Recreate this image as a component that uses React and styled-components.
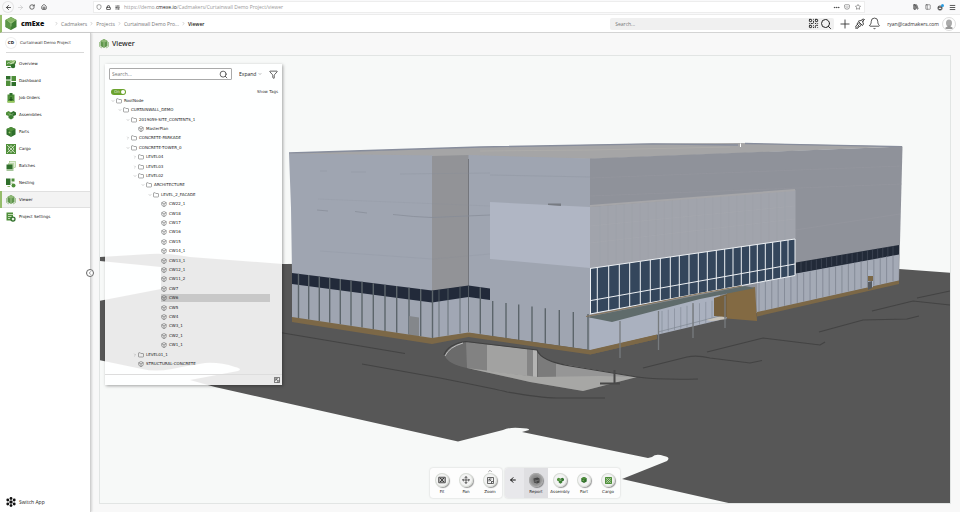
import React, { useState } from 'react';
import styled, { createGlobalStyle, css } from 'styled-components';
import {
  ArrowLeft, ArrowRight, RotateCw, House, Shield, Lock, SlidersHorizontal, Ellipsis, Star,
  PanelLeft, Menu, Search, Plus, Bell, QrCode, ChevronRight, ChevronLeft, ChevronDown, ChevronUp,
  Funnel, Box, Folder, Pocket, LibraryBig, Move,
} from 'lucide-react';

const GlobalStyle = createGlobalStyle`
  * { box-sizing: border-box; }
  body {
    margin: 0;
    background: #f8f8f8;
    color: #333;
    font-family: 'Open Sans', 'Noto Sans', sans-serif;
    font-size: 5px;
  }
  button, input, select {
    font: inherit;
    color: inherit;
    border: 0;
    padding: 0;
    margin: 0;
    background: none;
  }
  button { cursor: pointer; }
  a { color: inherit; text-decoration: none; }
  svg { display: block; flex: none; }
`

const small = css`
  font-family: 'DejaVu Sans', 'Noto Sans', sans-serif;
  font-size: 4px;
  line-height: 6px;
`

const Page = styled.div`
  display: flex;
  flex-direction: column;
  min-height: 100vh;
`

/* browser bar */

const BrowserBar = styled.div`
  display: flex;
  align-items: center;
  height: 15px;
  padding: 0 3px;
  background: #f9f9fa;
  border-bottom: 1px solid #ececec;
  color: #444;
`
const BrowserButtons = styled.div`
  display: flex;
  align-items: center;
  gap: ${p => p.$gap || 2}px;
`
const BrowserButton = styled.button`
  display: flex;
  align-items: center;
  justify-content: center;
  width: 10px;
  height: 10px;
  border-radius: 50%;
  opacity: ${p => p.disabled ? 0.3 : 1};
  ${p => p.$ring && css`box-shadow: 0 0 0 1px #e4e4e4;`}
`
const AddressBar = styled.div`
  display: flex;
  align-items: center;
  flex: 1;
  height: 12px;
  margin: 0 46px 0 44px;
  padding: 0 1px 0 2px;
  gap: 4px;
  background: #fff;
  border: 1px solid #ededed;
`
const Url = styled.div`
  flex: 1;
  font-size: 5px;
  line-height: 8px;
  color: #999;
  white-space: nowrap;
  b { color: #222; font-weight: 500; }
`

/* app header */

const Header = styled.header`
  display: flex;
  align-items: center;
  height: 18px;
  padding-right: 4px;
  background: #fff;
  border-bottom: 1px solid #d4d4d4;
  border-left: 2px solid #96bd6b;
`
const Logo = styled.a`
  display: flex;
  align-items: center;
  gap: 4px;
  width: 52px;
  padding-left: 3px;
  font-size: 7px;
  line-height: 12px;
  font-weight: 800;
  color: #111;
`
const Crumbs = styled.nav`
  display: flex;
  align-items: center;
  gap: 2px;
  flex: 1;
  font-size: 5px;
  line-height: 8px;
  color: #666;
  white-space: nowrap;
  svg { color: #999; }
`
const Crumb = styled.a`
  font-weight: ${p => p.$current ? 600 : 400};
  color: ${p => p.$current ? '#222' : '#777'};
`
const GlobalSearch = styled.label`
  display: flex;
  align-items: center;
  width: 224px;
  height: 12px;
  padding: 0 2px 0 5px;
  gap: 1px;
  border-radius: 2px;
  background: #f0f0f0;
  color: #222;
  input {
    flex: 1;
    min-width: 0;
    height: 10px;
    outline: none;
    font-size: 5px;
    &::placeholder { color: #777; }
  }
`
const HeaderActions = styled.div`
  display: flex;
  align-items: center;
  gap: 2px;
  margin: 0 6px 0 4px;
  color: #333;
`
const Email = styled.span`
  font-size: 5px;
  line-height: 8px;
  color: #333;
`
const Avatar = styled.button`
  display: flex;
  align-items: center;
  justify-content: center;
  width: 14px;
  height: 14px;
  margin-left: 3px;
  border-radius: 50%;
  border: 1px solid #ddd;
`

/* sidebar */

const Body = styled.div`
  display: flex;
  flex: 1;
`
const Sidebar = styled.aside`
  position: relative;
  display: flex;
  flex-direction: column;
  width: 91px;
  background: #fff;
  border-right: 1px solid #d0d0d0;
  box-shadow: 1px 0 2px rgba(0, 0, 0, 0.15);
`
const Project = styled.div`
  ${small}
  display: flex;
  align-items: center;
  gap: 4px;
  height: 20px;
  margin: 0 6px;
  border-bottom: 1px solid #d8d8d8;
  white-space: nowrap;
`
const ProjectBadge = styled.span`
  display: flex;
  align-items: center;
  justify-content: center;
  width: 10px;
  height: 10px;
  border-radius: 50%;
  box-shadow: 0 0 0 1px #eee;
  font-weight: 700;
  color: #222;
`
const NavList = styled.nav`
  display: flex;
  flex-direction: column;
  flex: 1;
  padding-top: 2px;
`
const NavItem = styled.a`
  ${small}
  display: flex;
  align-items: center;
  gap: 3px;
  height: 17px;
  padding-left: 4px;
  border-left: 2px solid transparent;
  color: #111;
  ${p => p.$active && css`
    background: #f3f3f3;
    border-left-color: #96bd6b;
    box-shadow: inset 0 1px #e0e0e0, inset 0 -1px #e0e0e0;
  `}
`
const SwitchApp = styled.button`
  display: flex;
  align-items: center;
  gap: 3px;
  height: 20px;
  padding-left: 6px;
  font-size: 5px;
  line-height: 8px;
  color: #222;
`
const CollapseButton = styled.button`
  position: absolute;
  right: -4px;
  top: 50%;
  transform: translateY(-50%);
  display: flex;
  align-items: center;
  justify-content: center;
  width: 8px;
  height: 8px;
  border-radius: 50%;
  border: 1px solid #666;
  background: #fff;
`

/* viewer */

const Main = styled.main`
  display: flex;
  flex-direction: column;
  flex: 1;
  padding: 0 9px 8px 8px;
`
const Title = styled.h1`
  display: flex;
  align-items: center;
  gap: 3px;
  height: 22px;
  margin: 0;
  font-family: 'Noto Sans', sans-serif;
  font-size: 7px;
  line-height: 10px;
  font-weight: 500;
  color: #222;
`
const Viewport = styled.section`
  position: relative;
  flex: 1;
  overflow: hidden;
  background: #f7f9f8;
  border: 1px solid #e2e5e4;
`
const Canvas = styled.svg`
  position: absolute;
  inset: 0;
  width: 100%;
  height: 100%;
`
const TreePanel = styled.div`
  position: absolute;
  left: 5px;
  top: 8px;
  display: flex;
  flex-direction: column;
  width: 177px;
  height: 321px;
  background: rgba(255, 255, 255, 0.88);
  box-shadow: 1px 1px 3px rgba(0, 0, 0, 0.35);
`
const PanelTools = styled.div`
  display: flex;
  align-items: center;
  justify-content: space-between;
  padding: 4px 4px 0;
`
const PanelSearch = styled.label`
  display: flex;
  align-items: center;
  width: 123px;
  height: 12px;
  padding: 0 3px 0 2px;
  border: 1px solid #aaa;
  border-radius: 1px;
  background: #fff;
  input {
    flex: 1;
    min-width: 0;
    height: 8px;
    font-size: 5px;
    outline: none;
    &::placeholder { color: #777; }
  }
`
const ExpandBox = styled.label`
  display: flex;
  align-items: center;
  gap: 1px;
  color: #777;
  select {
    appearance: none;
    font-size: 5px;
    line-height: 8px;
    font-weight: 500;
    color: #222;
    outline: none;
  }
`
const TagsRow = styled.div`
  ${small}
  display: flex;
  align-items: center;
  justify-content: space-between;
  height: 8px;
  margin-top: 8px;
  padding: 0 4px 0 6px;
`
const Toggle = styled.input`
  appearance: none;
  display: flex;
  align-items: center;
  justify-content: flex-end;
  width: 15px;
  height: 6px;
  padding: 0 1px;
  border-radius: 3px;
  background: #c4c4c4;
  color: #fff;
  font-size: 4px;
  line-height: 6px;
  cursor: pointer;
  &::after {
    content: '';
    width: 4px;
    height: 4px;
    border-radius: 50%;
    background: #fff;
  }
  &:checked { background: #6ba32f; }
  &:checked::before { content: 'On'; flex: 1; padding-left: 2px; opacity: 0.8; }
`
const Tree = styled.ul`
  display: flex;
  flex-direction: column;
  flex: 1;
  margin: 0;
  padding: 0;
  list-style: none;
`
const TreeItem = styled.li`
  display: flex;
  flex: 1;
  align-items: center;
  min-height: 0;
  padding-left: ${p => p.$indent}px;
  padding-right: 12px;
`
const Caret = styled.span`
  display: flex;
  justify-content: center;
  width: 7px;
  color: #777;
`
const TreeButton = styled.button`
  ${small}
  display: flex;
  flex: 1;
  align-items: center;
  gap: 2px;
  height: 8px;
  color: #222;
  white-space: nowrap;
  background: ${p => p.$selected ? '#c8c8c8' : 'none'};
  svg { color: #555; }
`
const PanelFooter = styled.div`
  display: flex;
  align-items: center;
  justify-content: flex-end;
  height: 11px;
  margin-top: 5px;
  padding-right: 2px;
  border-top: 1px solid #ddd;
`
const Toolbar = styled.div`
  position: absolute;
  left: 50%;
  bottom: 5px;
  transform: translateX(-50%);
  display: flex;
  gap: 3px;
`
const ToolGroup = styled.div`
  display: flex;
  height: 30px;
  border-radius: 3px;
  overflow: hidden;
  background: #fdfdfd;
  box-shadow: 0 0 2px rgba(0, 0, 0, 0.2);
`
const ToolButton = styled.button`
  ${small}
  display: flex;
  flex-direction: column;
  align-items: center;
  gap: 2px;
  width: 24px;
  padding-top: 5px;
  color: #222;
  background: ${p => p.$active ? '#dfdfe2' : 'none'};
`
const BackButton = styled.button`
  display: flex;
  justify-content: center;
  width: 19px;
  padding: 8px 3px 0 0;
  color: #111;
  background: #e8e8eb;
`
const Round = styled.span`
  display: flex;
  align-items: center;
  justify-content: center;
  width: 14px;
  height: 14px;
  border-radius: 50%;
  background: ${p => p.$active ? 'radial-gradient(#777, #b4b4b4)' : '#f3f3f3'};
  box-shadow: inset 0 0 0 1px ${p => p.$active ? '#aaa' : '#d8dcd6'}, 1px 1px 1px rgba(0, 0, 0, 0.4);
`
const UpMark = styled.span`
  position: absolute;
  top: 0;
  color: #555;
`

/* green line-up of sidebar icons */

const DARK = '#2f6f2b'
const MID = '#4f8f3a'
const LIGHT = '#8dbb6b'

const glyphs = {
  overview: (
    <>
      <path d="M0 3h12v11H0z" fill={MID} />
      <path d="M7 4l12-2v8l-6 4z" fill={LIGHT} />
      <path d="M2 9l4-2 4 3 7-5" stroke="#e8f2e0" strokeWidth="1.5" fill="none" />
      <circle cx="14" cy="14" r="4.500" fill={DARK} />
      <path d="M16 12l4-8M3 17h6" stroke={DARK} strokeWidth="2" />
    </>
  ),
  dashboard: (
    <>
      <rect x="0" y="0" width="9" height="7" fill={DARK} />
      <rect x="11" y="0" width="9" height="10" fill={MID} />
      <rect x="0" y="9" width="9" height="11" fill={MID} />
      <rect x="11" y="12" width="9" height="8" fill={DARK} />
    </>
  ),
  orders: (
    <>
      <rect x="3" y="3" width="14" height="16" fill={MID} />
      <rect x="7" y="0" width="6" height="5" fill={DARK} />
      <path d="M10 8v6M7 12l3 3 3-3" stroke="#153f16" strokeWidth="2" fill="none" />
      <path d="M3 16h14v3H3z" fill="#9ccc5c" />
    </>
  ),
  assemblies: (
    <>
      <path d="M5 2l5 3v5l-5 2-5-2V5z" fill={MID} />
      <path d="M15 2l5 3v5l-5 2-5-2V5z" fill={DARK} />
      <path d="M10 9l5 3v4l-5 3-5-3v-4z" fill="#3c7f32" />
      <path d="M5 7l5 3 5-3" stroke="#cfe3bf" strokeWidth="1" fill="none" />
    </>
  ),
  parts: (
    <>
      <path d="M10 0l9 4v11l-9 5-9-5V4z" fill={DARK} />
      <path d="M10 0l9 4-9 5-9-5z" fill={MID} />
      <path d="M10 9v11" stroke="#7fae64" />
      <circle cx="7" cy="11" r="2" fill="#9ccc6c" />
    </>
  ),
  cargo: (
    <>
      <rect x="0" y="0" width="20" height="20" fill={MID} />
      <path d="M2 2l16 16M18 2L2 18M4 10l6-7 6 7-6 7z" stroke="#e5f0dc" strokeWidth="1.5" fill="none" />
    </>
  ),
  batches: (
    <>
      <rect x="7" y="1" width="12" height="12" fill="#e2eedb" stroke={LIGHT} />
      <rect x="4" y="4" width="12" height="12" fill="#bcd6a8" />
      <rect x="1" y="7" width="12" height="9" fill={DARK} />
      <path d="M1 18h14" stroke={MID} strokeWidth="2" />
    </>
  ),
  nesting: (
    <>
      <rect x="0" y="1" width="9" height="13" fill={DARK} />
      <rect x="11" y="1" width="6" height="6" fill={MID} />
      <path d="M3 17h5M12 9v3" stroke={LIGHT} strokeWidth="2" />
      <circle cx="15" cy="15" r="4" fill={MID} />
    </>
  ),
  viewer: (
    <>
      <path d="M10 0l7 4v10l-7 4-7-4V4z" fill="#5f964c" />
      <path d="M10 0l7 4-7 4-7-4z" fill="#8fb877" />
      <path d="M10 8v10" stroke="#b9d3a9" strokeWidth="1.5" />
      <path d="M1 6v9l5 3M19 6v9l-5 3" stroke="#8db578" strokeWidth="1.5" fill="none" />
    </>
  ),
  settings: (
    <>
      <rect x="1" y="1" width="13" height="16" fill={MID} />
      <path d="M4 5h14M4 9h7M4 13h5" stroke="#e5f0dc" strokeWidth="1.5" />
      <circle cx="14" cy="14" r="4" fill="#e5f0dc" stroke={DARK} strokeWidth="2.5" />
    </>
  ),
}

const Glyph = ({ name, size = 10 }) => (
  <svg width={size} height={size} viewBox="0 0 20 20" aria-hidden="true">{glyphs[name]}</svg>
)

const ResizeIcon = ({ size }) => (
  <svg width={size} height={size} viewBox="0 0 14 14" fill="none" stroke="#444" strokeWidth="1.6" aria-hidden="true">
    <path d="M1 1h12v12H1zM4 9V4h5M4 4l5 5M9 13V9h4" />
  </svg>
)

const FitIcon = () => (
  <svg width="8" height="8" viewBox="0 0 16 16" fill="none" stroke="#333" strokeWidth="1.8" aria-hidden="true">
    <path d="M1.500 2.500h13v11h-13zM4 7V5h3M9 5h3v2M12 9v2H9M7 11H4V9M5 5l6 6M11 5l-6 6" />
  </svg>
)

const PlugIcon = () => (
  <svg width="12" height="12" viewBox="0 0 24 24" fill="none" stroke="#333" strokeWidth="1.8" aria-hidden="true">
    <path d="M9 7l8 8 2-3-2-5 4-4-3-1-4 3-5 1zM8 9l6 6-3 2-5-5zM6 13l-3 5 3 3 5-4M3 22l3-3M7 16l2 2M16 5l3 3" />
  </svg>
)

const navItems = [
  ['overview', 'Overview'],
  ['dashboard', 'Dashboard'],
  ['orders', 'Job Orders'],
  ['assemblies', 'Assemblies'],
  ['parts', 'Parts'],
  ['cargo', 'Cargo'],
  ['batches', 'Batches'],
  ['nesting', 'Nesting'],
  ['viewer', 'Viewer'],
  ['settings', 'Project Settings'],
]

// level, label, state: open / closed folder, or leaf
const treeNodes = [
  [0, 'RootNode', 'open'],
  [1, 'CURTAINWALL_DEMO', 'open'],
  [2, '2019059-SITE_CONTENTS_1', 'open'],
  [3, 'MasterPlan', 'leaf'],
  [2, 'CONCRETE-PARKADE', 'closed'],
  [2, 'CONCRETE-TOWER_0', 'open'],
  [3, 'LEVEL04', 'closed'],
  [3, 'LEVEL03', 'closed'],
  [3, 'LEVEL02', 'open'],
  [4, 'ARCHITECTURE', 'open'],
  [5, 'LEVEL_2_FACADE', 'open'],
  ...['CW22_1', 'CW18', 'CW17', 'CW16', 'CW15', 'CW14_1', 'CW13_1', 'CW12_1', 'CW11_2', 'CW7',
    'CW6', 'CW5', 'CW4', 'CW3_1', 'CW2_1', 'CW1_1'].map(n => [6, n, 'leaf']),
  [3, 'LEVEL01_1', 'closed'],
  [3, 'STRUCTURAL-CONCRETE', 'leaf'],
]

/* building model */

const lerp = (x, [x1, y1], [x2, y2]) => y1 + ((x - x1) * (y2 - y1)) / (x2 - x1)

const Mullions = ({ xs, top, bottom, ...rest }) => (
  <g {...rest}>
    {xs.map(x => (
      <line key={x} x1={x} x2={x} y1={lerp(x, ...top)} y2={lerp(x, ...bottom)} />
    ))}
  </g>
)

const range = (from, to, n) => Array.from({ length: n }, (_, i) => from + ((to - from) * i) / (n - 1))

const leftXs = [298.5, 308.7, 319.3, 329.7, 340.3, 351, 362, 373.3, 385, 396.7, 409, 420.7, 432.5]
const windowXs = [590.5, 597.3, 608.7, 619.3, 629.7, 640.3, 650.3, 660.3, 670.3, 679.3, 689, 698.3,
  707.3, 716.3, 724.7, 733, 741.3, 749.7, 757.3, 765.3, 772.7, 780.7, 788, 795]

const Scene = () => (
  <Canvas viewBox="100 56 850 447" preserveAspectRatio="xMidYMid slice" role="img" aria-label="Building model">
    {/* ground */}
    <path
      fill="#575757"
      d="M99 257L150 254Q168 253 190 257L283 264L600 262L899 269L952 273V504H733L622 479L667 461Q671 457 664 456
        Q656 453 652 457L648 458L522 432L529 430Q530 428 520 428Q510 427 503 430L458 441.500L215 387L190 380
        L238 371Q243 369 235 367Q220 362 205 363Q180 367 172 369Q155 372 142 369L99 360V301L161 289V267L99 261Z"
    />
    <g fill="none" stroke="#434343" strokeWidth="1.2">
      <path d="M280 332.500L405 353.500M362 364L440 378Q500 390 507 392Q540 398 557 398H605" />
      <path d="M643 368L687 357Q697 355 710 358L750 363L762 360.500M707 352L763 338L820 345L825 342" />
      <path d="M819 332L863 320L907 319L919 316M872 311L913 301L950 305M917 298L950 291" />
      <path d="M637 377Q660 380 698 379" />
    </g>

    {/* roof */}
    <path fill="#a5a5a6" d="M289 153L480 147L653 143.500L740 143L902.500 146.500L720 154L590 159L432 157L289 154.500Z" />
    <path fill="none" stroke="#878d9c" strokeWidth="1.3" d="M289 153L480 147L653 143.800L738 145M745 143.500L902 146.700" />
    <path fill="none" stroke="#adacaa" d="M480 151L590 150L730 147" />
    <path stroke="#fff" d="M740.500 143.500V147" />

    {/* left wing */}
    <path fill="#9fa5b1" d="M289 153.500L433 155.500V339L292 318V273L291 208Z" />
    <path fill="#929397" d="M432 156L469 155V286L432 291Z" />
    <path fill="#a1a7b4" d="M432 301L469 296V333L432 339Z" />
    <path fill="#9fa5b1" d="M468.500 155L590 158.500V350L468.500 333Z" />
    <path fill="none" stroke="#74767c" d="M468.500 159V286" />
    <g fill="none" stroke="#858b97" strokeWidth="0.700">
      <path d="M317 210L328 211M355 211.500L367 213M393 214.500Q415 217 432 217.500L490 215" />
      <path d="M320 171H327M351 172H366M400 174L490 173" opacity="0.4" />
      <path d="M318 199L490 206M320 251L432 259L490 254" opacity="0.25" />
      <path d="M490 175L590 177" opacity="0.4" />
    </g>
    <path fill="#b0b6c4" d="M490 202L590 207V268L490 259Z" />
    <path fill="#777b82" d="M548 203.500H561V206L548 205Z" />

    <path fill="#222a3a" d="M292 273L432 290.500L468.500 285.500L490 288.500V300L468.500 297L432 302.500L292 284Z" />
    <g stroke="#5c656b" strokeWidth="1.4">
      <Mullions xs={leftXs} top={[[292, 273], [432, 290.5]]} bottom={[[292, 317], [432, 338]]} />
      <Mullions xs={[439, 448, 460, 468.5]} top={[[432, 290.5], [468, 285.5]]} bottom={[[432, 338], [468, 332]]} strokeWidth="0.800" />
      <Mullions xs={[480.3]} top={[[468, 285.5], [490, 288.5]]} bottom={[[468, 332], [590, 350]]} />
      <Mullions
        xs={[492.7, 506, 518.7, 532, 545.3, 559.3, 573.3, 588]}
        top={[[492, 301], [588, 314]]}
        bottom={[[468, 333], [590, 350]]}
      />
    </g>
    <path fill="#84878b" d="M409 316L419 317.500V339.500L409 338Z" />
    <path fill="#ddd" d="M412 338.500L421 337.500V341L412 340Z" />
    <path fill="#7c6847" d="M292 317L432 338L468.500 332.500L590 350L657 334.500V339L590 354.500L468.500 337L432 344L292 322Z" />

    {/* right wing */}
    <path fill="#8f929a" d="M590 158.500L902.500 146.500L899 281L757 313L590 340Z" />
    <path fill="none" stroke="#999ba3" strokeWidth="0.600" d="M590 178L902 166M590 196L902 184M795 230L900 214" opacity="0.6" />
    <path fill="#a1a4ac" d="M590 207L795.500 190V240L590 270Z" />
    <path fill="none" stroke="#a6a6a9" strokeWidth="2" d="M590 206L795 190" />
    <path fill="none" stroke="#b1b1b5" strokeWidth="0.600" d="M590 226L795 206M590 243L795 219" opacity="0.3" />
    <Mullions xs={range(600, 785, 24)} top={[[590, 207], [795, 191]]} bottom={[[590, 268], [795, 239]]} stroke="#989ba4" strokeWidth="0.300" opacity="0.5" />
    <path fill="#a4aab6" d="M757 281L796 273L899 254L898.500 280.500L757 313Z" />
    <path fill="#222a38" d="M796 262.500L899 245V254.500L796 273.500Z" />
    <Mullions xs={range(801, 893, 19)} top={[[796, 263], [899, 245]]} bottom={[[796, 273], [899, 254]]} stroke="#4a5160" strokeWidth="0.600" />
    <Mullions xs={range(759, 893, 22)} top={[[757, 282], [899, 254]]} bottom={[[757, 312], [899, 280]]} stroke="#7e8490" strokeWidth="0.800" />
    <path fill="#7c6847" d="M757 312L899 280.500V284L757 316.500Z" />
    <path fill="#aab2c1" d="M868 270H873V287L868 289Z" />
    <path fill="#7c6847" d="M868 276H873V281H868Z" />
    <path fill="#575b60" d="M868 282L872 281V288L868 290Z" />

    {/* entrance */}
    <path fill="#aab1bf" d="M590 318L720 294V320L590 350.500Z" />
    <Mullions xs={range(662, 712, 9)} top={[[657, 312], [720, 299]]} bottom={[[657, 334], [720, 320]]} stroke="#858d99" strokeWidth="0.700" />
    <path fill="none" stroke="#7e8791" strokeWidth="0.700" d="M658 332L720 316" />
    <path fill="#7c6847" d="M590 350L657 334.500V339L590 354.500Z" />
    <path fill="#c8c4bb" d="M706 320L722 316L727 319L712 321Z" />
    <path fill="#76603d" d="M714 298L727 294V317L714 316Z" />
    <path fill="#836a43" d="M727 293L755 287L757 321L727 318.500Z" />
    <path fill="#34465c" d="M590 268.500L795 239V275.500L590 314Z" />
    <g stroke="#eef1f4" fill="none" strokeWidth="1">
      <Mullions xs={windowXs} top={[[590, 268.5], [795, 239]]} bottom={[[590, 314], [795, 275.5]]} />
      <path d="M590 268.500L795 239M590 300.700L795 264M590 314L795 275.500" />
    </g>
    <path fill="#5f6b6b" d="M587 317L745 286L755 288L700 299L612 322Z" />
    <path fill="none" stroke="#86745a" strokeWidth="1" d="M586 316.500L700 293.500L742 286" />
    <g stroke="#777b7e" strokeWidth="1.3">
      <path d="M620 321V358M658.500 311V350M693 303V338M725 296V328" />
    </g>

    {/* parkade ramp */}
    <path fill="#6b6b6b" d="M445 356Q448 345 466 341.500L537 350Q545 362 570 366L637 377L583 391L530 382L467 368Q448 364 445 356Z" />
    <path fill="#828282" d="M466 342L487 344.500V371L467 368Z" />
    <path fill="#a2a2a1" d="M487 344.500L527 349V376L487 371Z" />
    <path fill="#858585" d="M527 349H533V378L527 377Z" />
    <path fill="#b4b4b3" d="M533 350H537V378H533Z" />
    <path fill="#7b7b7b" d="M538 353Q545 361 560 364V377H538Z" />
    <path fill="#969696" d="M556 363L637 377L600 379L556 377Z" />
    <path fill="#a7a7a5" d="M467 368L538 377L600 376L637 377L583 391L530 382Z" />
    <path fill="none" stroke="#404040" strokeWidth="1.100" d="M444 355Q448 344 466 341.500L537 350Q541 361 570 366L637 377" />
    <path fill="none" stroke="#d5d5d5" strokeWidth="0.800" d="M445 356Q449 347 463 343" />
    <path stroke="#484848" strokeWidth="2" d="M614.500 370V384M600 383.500H620" />
  </Canvas>
)

function App() {
  const [selected, setSelected] = useState('CW6')
  const [showTags, setShowTags] = useState(true)

  return (
    <Page>
      <GlobalStyle />
      <BrowserBar>
        <BrowserButtons>
          <BrowserButton $ring aria-label="Back"><ArrowLeft size={7} strokeWidth={3} /></BrowserButton>
          <BrowserButton disabled aria-label="Forward"><ArrowRight size={7} /></BrowserButton>
          <BrowserButton aria-label="Reload"><RotateCw size={6} strokeWidth={3} /></BrowserButton>
          <BrowserButton aria-label="Home"><House size={6} strokeWidth={3} /></BrowserButton>
        </BrowserButtons>
        <AddressBar>
          <Shield size={6} />
          <Lock size={5} strokeWidth={4} />
          <SlidersHorizontal size={5} strokeWidth={3} />
          <Url>https://demo.<b>cmexe.io</b>/Cadmakers/Curtainwall Demo Project/viewer</Url>
          <BrowserButtons $gap={1}>
            <BrowserButton aria-label="Page actions"><Ellipsis size={7} strokeWidth={3} /></BrowserButton>
            <BrowserButton aria-label="Save to Pocket"><Pocket size={6} /></BrowserButton>
            <BrowserButton aria-label="Bookmark"><Star size={6} /></BrowserButton>
          </BrowserButtons>
        </AddressBar>
        <BrowserButtons>
          <BrowserButton aria-label="Library"><LibraryBig size={6} strokeWidth={3} /></BrowserButton>
          <BrowserButton aria-label="Sidebars"><PanelLeft size={6} /></BrowserButton>
          <BrowserButton aria-label="Account">
            <svg width="7" height="7" viewBox="0 0 14 14">
              <circle cx="6" cy="8" r="5" fill="#555" />
              <path d="M3 10q3-3 6 0M6 5v2" stroke="#eee" strokeWidth="2" />
              <circle cx="11" cy="3" r="3" fill="#2a9be0" />
            </svg>
          </BrowserButton>
          <BrowserButton aria-label="Menu"><Menu size={7} strokeWidth={3} /></BrowserButton>
        </BrowserButtons>
      </BrowserBar>

      <Header>
        <Logo href="#">
          <svg width="12" height="13" viewBox="0 0 24 26" aria-hidden="true">
            <path d="M12 0l11 6v14l-11 6L1 20V6z" fill="#417f35" />
            <path d="M12 0l11 6-11 7L1 6z" fill="#85b565" />
            <path d="M12 13v13L1 20V6z" fill="#5c9648" />
            <path d="M7 9l5 3 5-3M12 12v7" stroke="#a7cc8c" strokeWidth="1.5" fill="none" />
          </svg>
          cmExe
        </Logo>
        <Crumbs aria-label="Breadcrumb">
          <ChevronRight size={5} />
          <Crumb href="#">Cadmakers</Crumb>
          <ChevronRight size={5} />
          <Crumb href="#">Projects</Crumb>
          <ChevronRight size={5} />
          <Crumb href="#">Curtainwall Demo Pro...</Crumb>
          <ChevronRight size={5} />
          <Crumb href="#" $current>Viewer</Crumb>
        </Crumbs>
        <GlobalSearch>
          <input type="text" placeholder="Search..." aria-label="Search everything" />
          <QrCode size={11} strokeWidth={2} />
          <Search size={12} />
        </GlobalSearch>
        <HeaderActions>
          <button aria-label="Add"><Plus size={14} strokeWidth={1.5} /></button>
          <button aria-label="Tools"><PlugIcon /></button>
          <button aria-label="Notifications"><Bell size={13} strokeWidth={1.5} /></button>
        </HeaderActions>
        <Email>ryan@cadmakers.com</Email>
        <Avatar aria-label="Account">
          <svg width="8" height="10" viewBox="0 0 16 20">
            <ellipse cx="8" cy="8" rx="6" ry="7" fill="#aaa" />
            <path d="M5 13h6v2l4 2v3H1v-3l4-2z" fill="#999" />
          </svg>
        </Avatar>
      </Header>

      <Body>
        <Sidebar>
          <Project><ProjectBadge>CD</ProjectBadge>Curtainwall Demo Project</Project>
          <NavList>
            {navItems.map(([icon, label]) => (
              <NavItem href="#" key={icon} $active={icon === 'viewer'}>
                <Glyph name={icon} />
                {label}
              </NavItem>
            ))}
          </NavList>
          <SwitchApp>
            <svg width="10" height="10" viewBox="0 0 20 20" fill="#111" aria-hidden="true">
              <path d="M10 2v16M3 6l14 8M17 6L3 14" stroke="#111" />
              <circle cx="10" cy="10" r="3" />
              <circle cx="10" cy="2.800" r="2.800" />
              <circle cx="10" cy="17.200" r="2.800" />
              <circle cx="3.500" cy="6" r="2.800" />
              <circle cx="16.500" cy="6" r="2.800" />
              <circle cx="3.500" cy="14" r="2.800" />
              <circle cx="16.500" cy="14" r="2.800" />
            </svg>
            Switch App
          </SwitchApp>
          <CollapseButton aria-label="Collapse sidebar"><ChevronLeft size={6} /></CollapseButton>
        </Sidebar>

        <Main>
          <Title><Glyph name="viewer" />Viewer</Title>
          <Viewport>
            <Scene />
            <TreePanel>
              <PanelTools>
                <PanelSearch>
                  <input type="text" placeholder="Search..." aria-label="Search tree" />
                  <Search size={9} />
                </PanelSearch>
                <ExpandBox>
                  <select aria-label="Expand"><option>Expand</option></select>
                  <ChevronDown size={4} strokeWidth={3} />
                </ExpandBox>
                <button aria-label="Filter"><Funnel size={9} /></button>
              </PanelTools>
              <TagsRow>
                <Toggle
                  id="tags"
                  type="checkbox"
                  checked={showTags}
                  onChange={e => setShowTags(e.target.checked)}
                />
                <label htmlFor="tags">Show Tags</label>
              </TagsRow>
              <Tree>
                {treeNodes.map(([level, label, state]) => (
                  <TreeItem key={label} $indent={4 + Math.floor((level * 15) / 2)}>
                    <Caret>
                      {state === 'open' && <ChevronDown size={4} />}
                      {state === 'closed' && <ChevronRight size={4} />}
                    </Caret>
                    <TreeButton $selected={label === selected} onClick={() => setSelected(label)}>
                      {state === 'leaf'
                        ? <Box size={6} />
                        : <Folder size={6} />}
                      {label}
                    </TreeButton>
                  </TreeItem>
                ))}
              </Tree>
              <PanelFooter>
                <button aria-label="Resize panel"><ResizeIcon size={6} /></button>
              </PanelFooter>
            </TreePanel>

            <Toolbar>
              <ToolGroup>
                <ToolButton><Round><FitIcon /></Round>Fit</ToolButton>
                <ToolButton><Round><Move size={8} /></Round>Pan</ToolButton>
                <ToolButton>
                  <UpMark><ChevronUp size={6} /></UpMark>
                  <Round><ResizeIcon size={7} /></Round>
                  Zoom
                </ToolButton>
              </ToolGroup>
              <ToolGroup>
                <BackButton aria-label="Back"><ArrowLeft size={8} strokeWidth={3} /></BackButton>
                <ToolButton $active>
                  <Round $active>
                    <svg width="7" height="7" viewBox="0 0 14 14" fill="#444">
                      <path d="M1 3l8-2 4 2v8l-5 2-6-2z" />
                      <path d="M3 6l5 1 4-1M3 9l5 1" stroke="#999" fill="none" />
                    </svg>
                  </Round>
                  Report
                </ToolButton>
                <ToolButton><Round><Glyph name="assemblies" size={7} /></Round>Assembly</ToolButton>
                <ToolButton><Round><Glyph name="parts" size={6} /></Round>Part</ToolButton>
                <ToolButton><Round><Glyph name="cargo" size={7} /></Round>Cargo</ToolButton>
              </ToolGroup>
            </Toolbar>
          </Viewport>
        </Main>
      </Body>
    </Page>
  )
}

export default App;
